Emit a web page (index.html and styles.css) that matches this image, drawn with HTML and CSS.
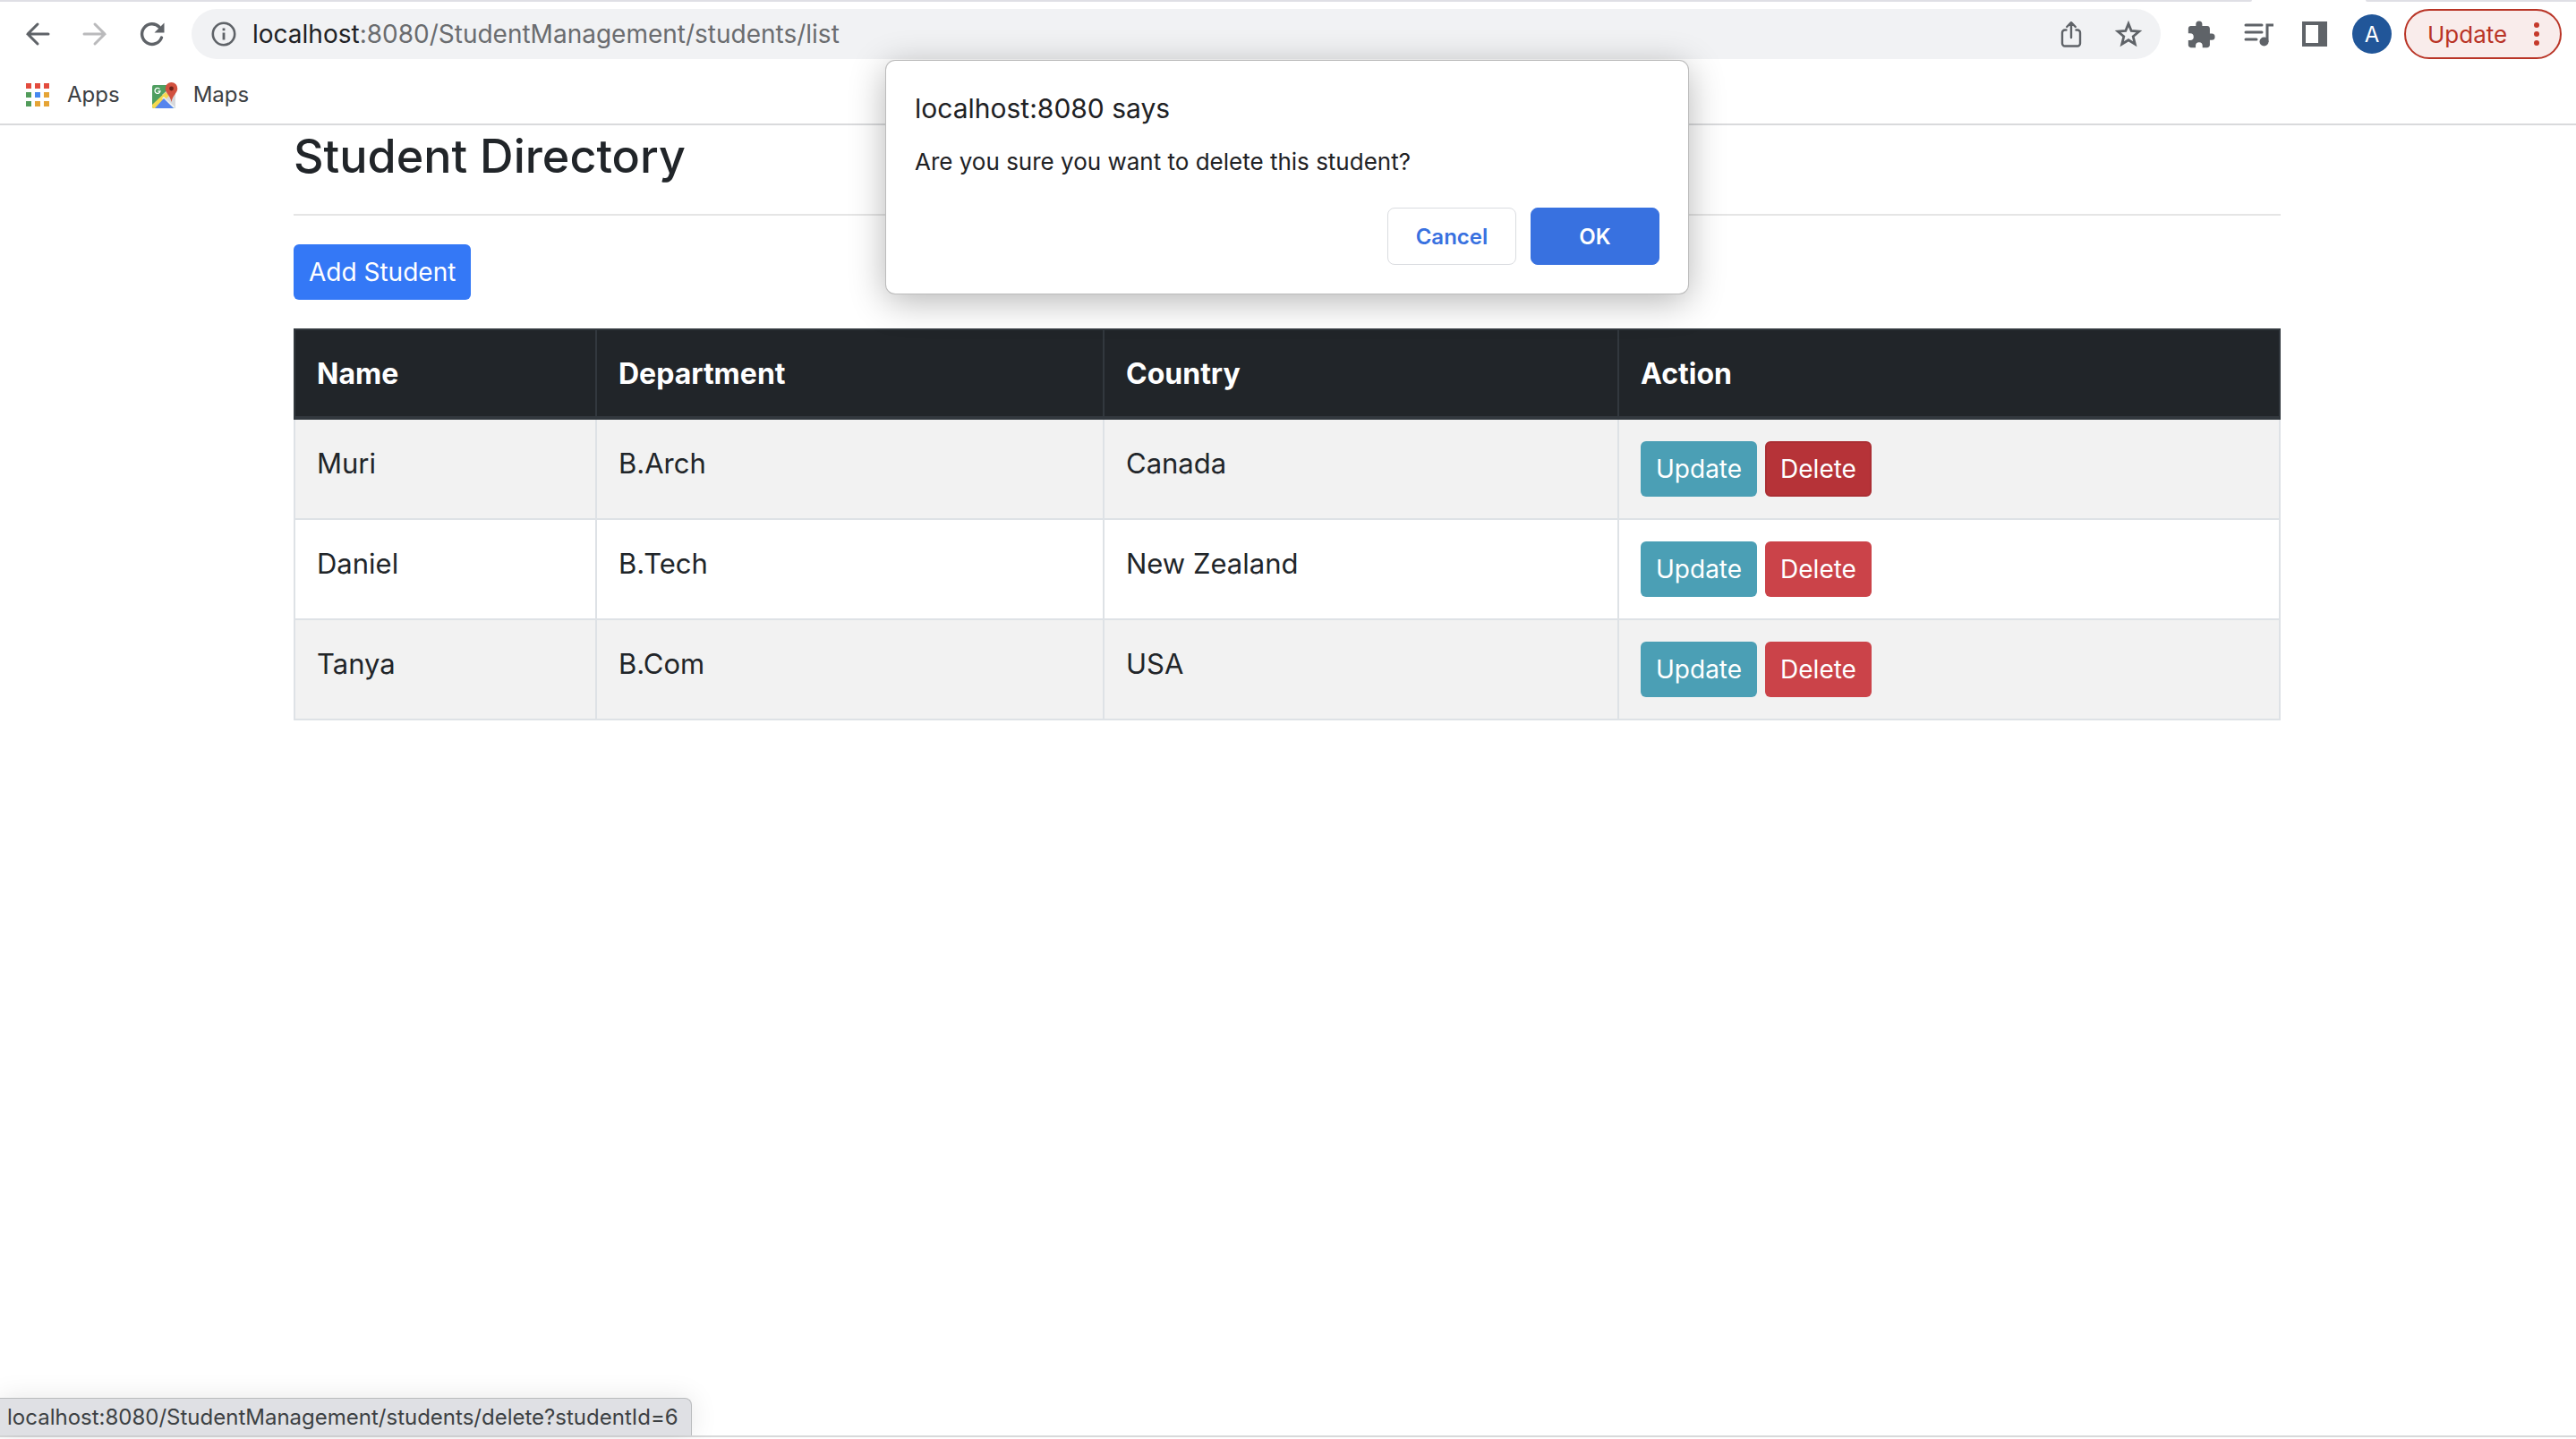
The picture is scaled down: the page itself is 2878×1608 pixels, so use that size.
FILE: index.html
```html
<!DOCTYPE html>
<html lang="en">
<head>
<meta charset="utf-8">
<title>Student Directory</title>
<link rel="stylesheet" href="styles.css">
</head>
<body>
<div class="browser">
  <header class="chrome">
    <div class="tab-edge"><span class="tab-edge-left"></span><span class="tab-edge-right"></span></div>
    <div class="toolbar">
      <button class="icon-btn" aria-label="Back"><svg width="32" height="32" viewBox="0 0 32 32" fill="none" stroke="#5f6368" stroke-width="3" stroke-linecap="round"><path d="M28 16H5M16 5 5 16l11 11"/></svg></button>
      <button class="icon-btn" aria-label="Forward" disabled><svg width="32" height="32" viewBox="0 0 32 32" fill="none" stroke="#bababc" stroke-width="3" stroke-linecap="round"><path d="M4 16h23M16 5l11 11-11 11"/></svg></button>
      <button class="icon-btn" aria-label="Reload"><svg width="32" height="32" viewBox="0 0 32 32"><path d="M26.5 20A11.3 11.3 0 1 1 24 8.200" fill="none" stroke="#5f6368" stroke-width="3.400" stroke-linecap="round"/><path d="M29.500 3.500V14.500H18.500z" fill="#5f6368"/></svg></button>
      <div class="omnibox">
        <button class="bare" aria-label="View site information"><svg width="28" height="28" viewBox="0 0 28 28"><circle cx="14" cy="14" r="12.200" fill="none" stroke="#5f6368" stroke-width="2.600"/><path d="M12.600 12.500h2.800v8h-2.800zM12.600 7.500h2.800v2.800h-2.800z" fill="#5f6368"/></svg></button>
        <div class="url"><span class="host">localhost</span>:8080/StudentManagement/students/list</div>
        <button class="icon-btn" aria-label="Share"><svg width="32" height="32" viewBox="0 0 32 32" fill="none" stroke="#5f6368" stroke-width="2.400" stroke-linecap="round" stroke-linejoin="round"><path d="M10.500 11.500H9a3 3 0 0 0-3 3v12a3 3 0 0 0 3 3h14a3 3 0 0 0 3-3v-12a3 3 0 0 0-3-3h-1.500M16 20V3.500M11.200 8 16 3.200 20.800 8"/></svg></button>
        <button class="icon-btn" aria-label="Bookmark this tab"><svg width="32" height="32" viewBox="0 0 32 32"><path d="M16 4.500l3.200 8 8.600.700-6.600 5.600 2.100 8.400L16 22.700l-7.300 4.500 2.100-8.400-6.600-5.600 8.600-.700z" fill="none" stroke="#5f6368" stroke-width="2.800"/></svg></button>
      </div>
      <div class="tools">
        <button class="icon-btn" aria-label="Extensions"><svg width="34" height="34" viewBox="0 0 24 24" fill="#5f6368"><path d="M20.500 11H19V7c0-1.100-.900-2-2-2h-4V3.500a2.500 2.500 0 0 0-5 0V5H4c-1.100 0-2 .900-2 2v3.800h1.500a2.700 2.700 0 0 1 0 5.400H2V20c0 1.100.900 2 2 2h3.800v-1.500a2.700 2.700 0 0 1 5.400 0V22H17c1.100 0 2-.900 2-2v-4h1.500a2.500 2.500 0 0 0 0-5z"/></svg></button>
        <button class="icon-btn" aria-label="Media controls"><svg width="34" height="32" viewBox="0 0 34 32"><path d="M3 6h18M3 14h18M3 22h12" fill="none" stroke="#5f6368" stroke-width="3" stroke-linecap="round"/><path d="M27 25V6h7" fill="none" stroke="#5f6368" stroke-width="3"/><circle cx="23.500" cy="24.500" r="5" fill="#5f6368"/></svg></button>
        <button class="icon-btn" aria-label="Side panel"><svg width="28" height="28" viewBox="0 0 28 28"><path fill="#5f6368" fill-rule="evenodd" d="M0 0h28v28H0zM4 4v20h14V4z"/></svg></button>
        <button class="avatar" aria-label="Profile">A</button>
        <button class="update">Update<svg width="6" height="28" viewBox="0 0 6 28" fill="#c5392b"><circle cx="3" cy="4" r="3"/><circle cx="3" cy="14" r="3"/><circle cx="3" cy="24" r="3"/></svg></button>
      </div>
    </div>
    <nav class="bookmarks">
      <a href="#apps" class="bookmark"><svg width="26" height="26" viewBox="0 0 26 26"><path fill="#e34b3d" d="M0 0h6v6H0zM10 0h6v6h-6zM20 0h6v6h-6z"/><path fill="#529c5b" d="M0 10h6v6H0zM0 20h6v6H0z"/><path fill="#4688f0" d="M10 10h6v6h-6z"/><path fill="#e5a435" d="M20 10h6v6h-6zM10 20h6v6h-6zM20 20h6v6h-6z"/></svg>Apps</a>
      <a href="#maps" class="bookmark"><svg class="maps-icon" width="26" height="29" viewBox="0 0 26 29"><defs><clipPath id="map"><rect y="3" width="26" height="26" rx="2"/></clipPath></defs><g clip-path="url(#map)"><path fill="#4f9e60" d="M0 3h26v26H0z"/><path fill="#d8d9dc" d="M26 6v23L11 14 20 6z"/><path fill="#f5d950" d="M0 25 15 11l4 4L4 29H0z"/><path fill="#f1f2f4" d="M13 16l14 13h-3L11 18z"/><path fill="#5585ed" d="M13 18 3 29h21z"/></g><path d="M8.500 7.700A3 3 0 1 0 9 10H6.500" fill="none" stroke="#fff" stroke-width="1.300"/><path fill="#d2513f" d="M21.500 0A6.800 6.800 0 0 0 14.700 7c0 5 5.300 7 6.800 15C23 14 28.300 12 28.300 7A6.800 6.800 0 0 0 21.500 0z"/><circle cx="21.500" cy="7" r="2.400" fill="#6d2219"/></svg>Maps</a>
    </nav>
  </header>

  <main class="page">
    <h1 class="title">Student Directory</h1>
    <hr class="rule">
    <button class="btn btn-primary">Add Student</button>
    <table class="students">
      <colgroup><col class="col-name"><col class="col-dept"><col class="col-country"><col></colgroup>
      <thead><tr><th scope="col">Name</th><th scope="col">Department</th><th scope="col">Country</th><th scope="col">Action</th></tr></thead>
      <tbody>
        <tr><td>Muri</td><td>B.Arch</td><td>Canada</td><td><div class="actions"><a href="#update" class="btn btn-info">Update</a><a href="#delete" class="btn btn-danger active">Delete</a></div></td></tr>
        <tr><td>Daniel</td><td>B.Tech</td><td>New Zealand</td><td><div class="actions"><a href="#update" class="btn btn-info">Update</a><a href="#delete" class="btn btn-danger">Delete</a></div></td></tr>
        <tr><td>Tanya</td><td>B.Com</td><td>USA</td><td><div class="actions"><a href="#update" class="btn btn-info">Update</a><a href="#delete" class="btn btn-danger">Delete</a></div></td></tr>
      </tbody>
    </table>
  </main>

  <div class="dialog" role="alertdialog" aria-labelledby="dialog-title" aria-describedby="dialog-text">
    <h2 class="dialog-title" id="dialog-title">localhost:8080 says</h2>
    <p class="dialog-text" id="dialog-text">Are you sure you want to delete this student?</p>
    <div class="dialog-actions"><button class="dialog-btn">Cancel</button><button class="dialog-btn dialog-ok">OK</button></div>
  </div>
  <div class="status">localhost:8080/StudentManagement/students/delete?studentId=6</div>
</div>
</body>
</html>
```
FILE: styles.css
```css
* { box-sizing: border-box; }
body { margin: 0; background: #fff; color: #212529; font-family: Inter, "Liberation Sans", sans-serif; }
button { margin: 0; padding: 0; border: 0; background: none; color: inherit; font: inherit; cursor: pointer; }
a { color: inherit; text-decoration: none; }
svg { display: block; flex: none; }

.browser { position: relative; display: flex; flex-direction: column; min-height: 100vh; padding-bottom: 2px; }
.browser::after { content: ""; height: 2px; margin-top: auto; background: #d8d9da; }

/* Browser toolbar */
.chrome { border-bottom: 2px solid #d9dadc; }
.tab-edge { display: flex; justify-content: space-between; height: 2px; }
.tab-edge-left, .tab-edge-right { background: #dfdfe5; }
.tab-edge-left { flex: 1; margin-right: 127px; border-bottom-right-radius: 4px; }
.tab-edge-right { width: 235px; border-bottom-left-radius: 4px; }
.toolbar { display: flex; align-items: center; gap: 32px; padding: 8px 16px 8px 26px; }
.icon-btn { display: grid; place-items: center; width: 32px; height: 32px; flex: none; }
.bare { flex: none; }
.omnibox { display: flex; flex: 1; align-items: center; gap: 32px; height: 56px; margin-left: -4px; padding: 0 20px 0 22px; border-radius: 28px; background: #f1f2f4; }
.url { flex: 1; margin-left: -14px; color: #6a6c6f; font-size: 28px; line-height: 36px; }
.host { color: #202124; }
.tools { display: flex; align-items: center; gap: 32px; margin-left: -4px; }
.avatar { width: 44px; height: 44px; margin: 0 -18px 0 -6px; border-radius: 50%; background: #215699; color: #fff; font-size: 24px; }
.update { display: flex; align-items: center; justify-content: space-between; width: 176px; height: 56px; padding: 0 23px 0 24px; border: 2px solid #b93426; border-radius: 28px; background: #f9eceb; color: #b93426; font-size: 26px; }
.bookmarks { display: flex; align-items: center; gap: 36px; height: 64px; padding: 0 29px; }
.bookmark { display: flex; align-items: center; gap: 20px; color: #3c4043; font-size: 24px; line-height: 32px; }
.maps-icon { overflow: visible; }

/* Page content */
.page { width: 2222px; max-width: 100%; margin: 0 auto; padding-right: 2px; }
.title { margin: 0; font-size: 52px; font-weight: 500; line-height: 70px; }
.rule { height: 2px; margin: 29px 0 32px; border: 0; background: #e5e5e5; }
.btn { display: inline-block; padding: 10px 17px; border-radius: 6px; color: #fff; font-size: 28px; line-height: 42px; }
.btn-primary { background: #3478f6; }
.btn-info { background: #4b9fb5; }
.btn-danger { background: #cb4349; }
.btn-danger.active { border: 2px solid #ab2f34; padding: 8px 15px; background: #b63338; }
.students { width: 100%; margin-top: 32px; border-collapse: collapse; table-layout: fixed; font-size: 31px; line-height: 50px; }
.col-name { width: 337px; }
.col-dept { width: 567px; }
.col-country { width: 575px; }
.students th, .students td { padding: 24px; border: 2px solid #dee2e6; text-align: left; vertical-align: top; }
.students th { padding-bottom: 22px; border-color: #32383e; border-bottom-width: 4px; background: #212529; color: #fff; font-size: 32px; font-weight: 700; }
.students tbody tr:nth-child(odd) { background: #f2f2f2; }
.actions { display: flex; gap: 9px; }

/* Confirmation dialog */
.dialog { position: absolute; top: 68px; left: 50%; width: 896px; margin-left: -449px; padding: 32px; border-radius: 10px; background: #fff; color: #202124; box-shadow: 0 0 0 1px #bcbcbc, 0 8px 40px rgba(0,0,0,.3); }
.dialog-title { margin: 0; font-size: 30px; font-weight: 400; line-height: 42px; }
.dialog-text { margin: 20px 0 32px; font-size: 26px; line-height: 38px; }
.dialog-actions { display: flex; justify-content: flex-end; gap: 16px; }
.dialog-btn { width: 144px; height: 64px; border: 1px solid #dadce0; border-radius: 8px; color: #3871e0; font-size: 24px; font-weight: 600; }
.dialog-ok { border-color: #3871e0; background: #3871e0; color: #fff; }

/* Link status bubble */
.status { position: absolute; bottom: 4px; left: 0; padding: 4px 14px 3px 8px; border: 1px solid #b9bbbd; border-left: 0; border-bottom: 0; border-top-right-radius: 8px; background: #dfe0e4; color: #3c4043; font-size: 24px; line-height: 34px; box-shadow: 0 0 30px rgba(0,0,0,.1); }
```
